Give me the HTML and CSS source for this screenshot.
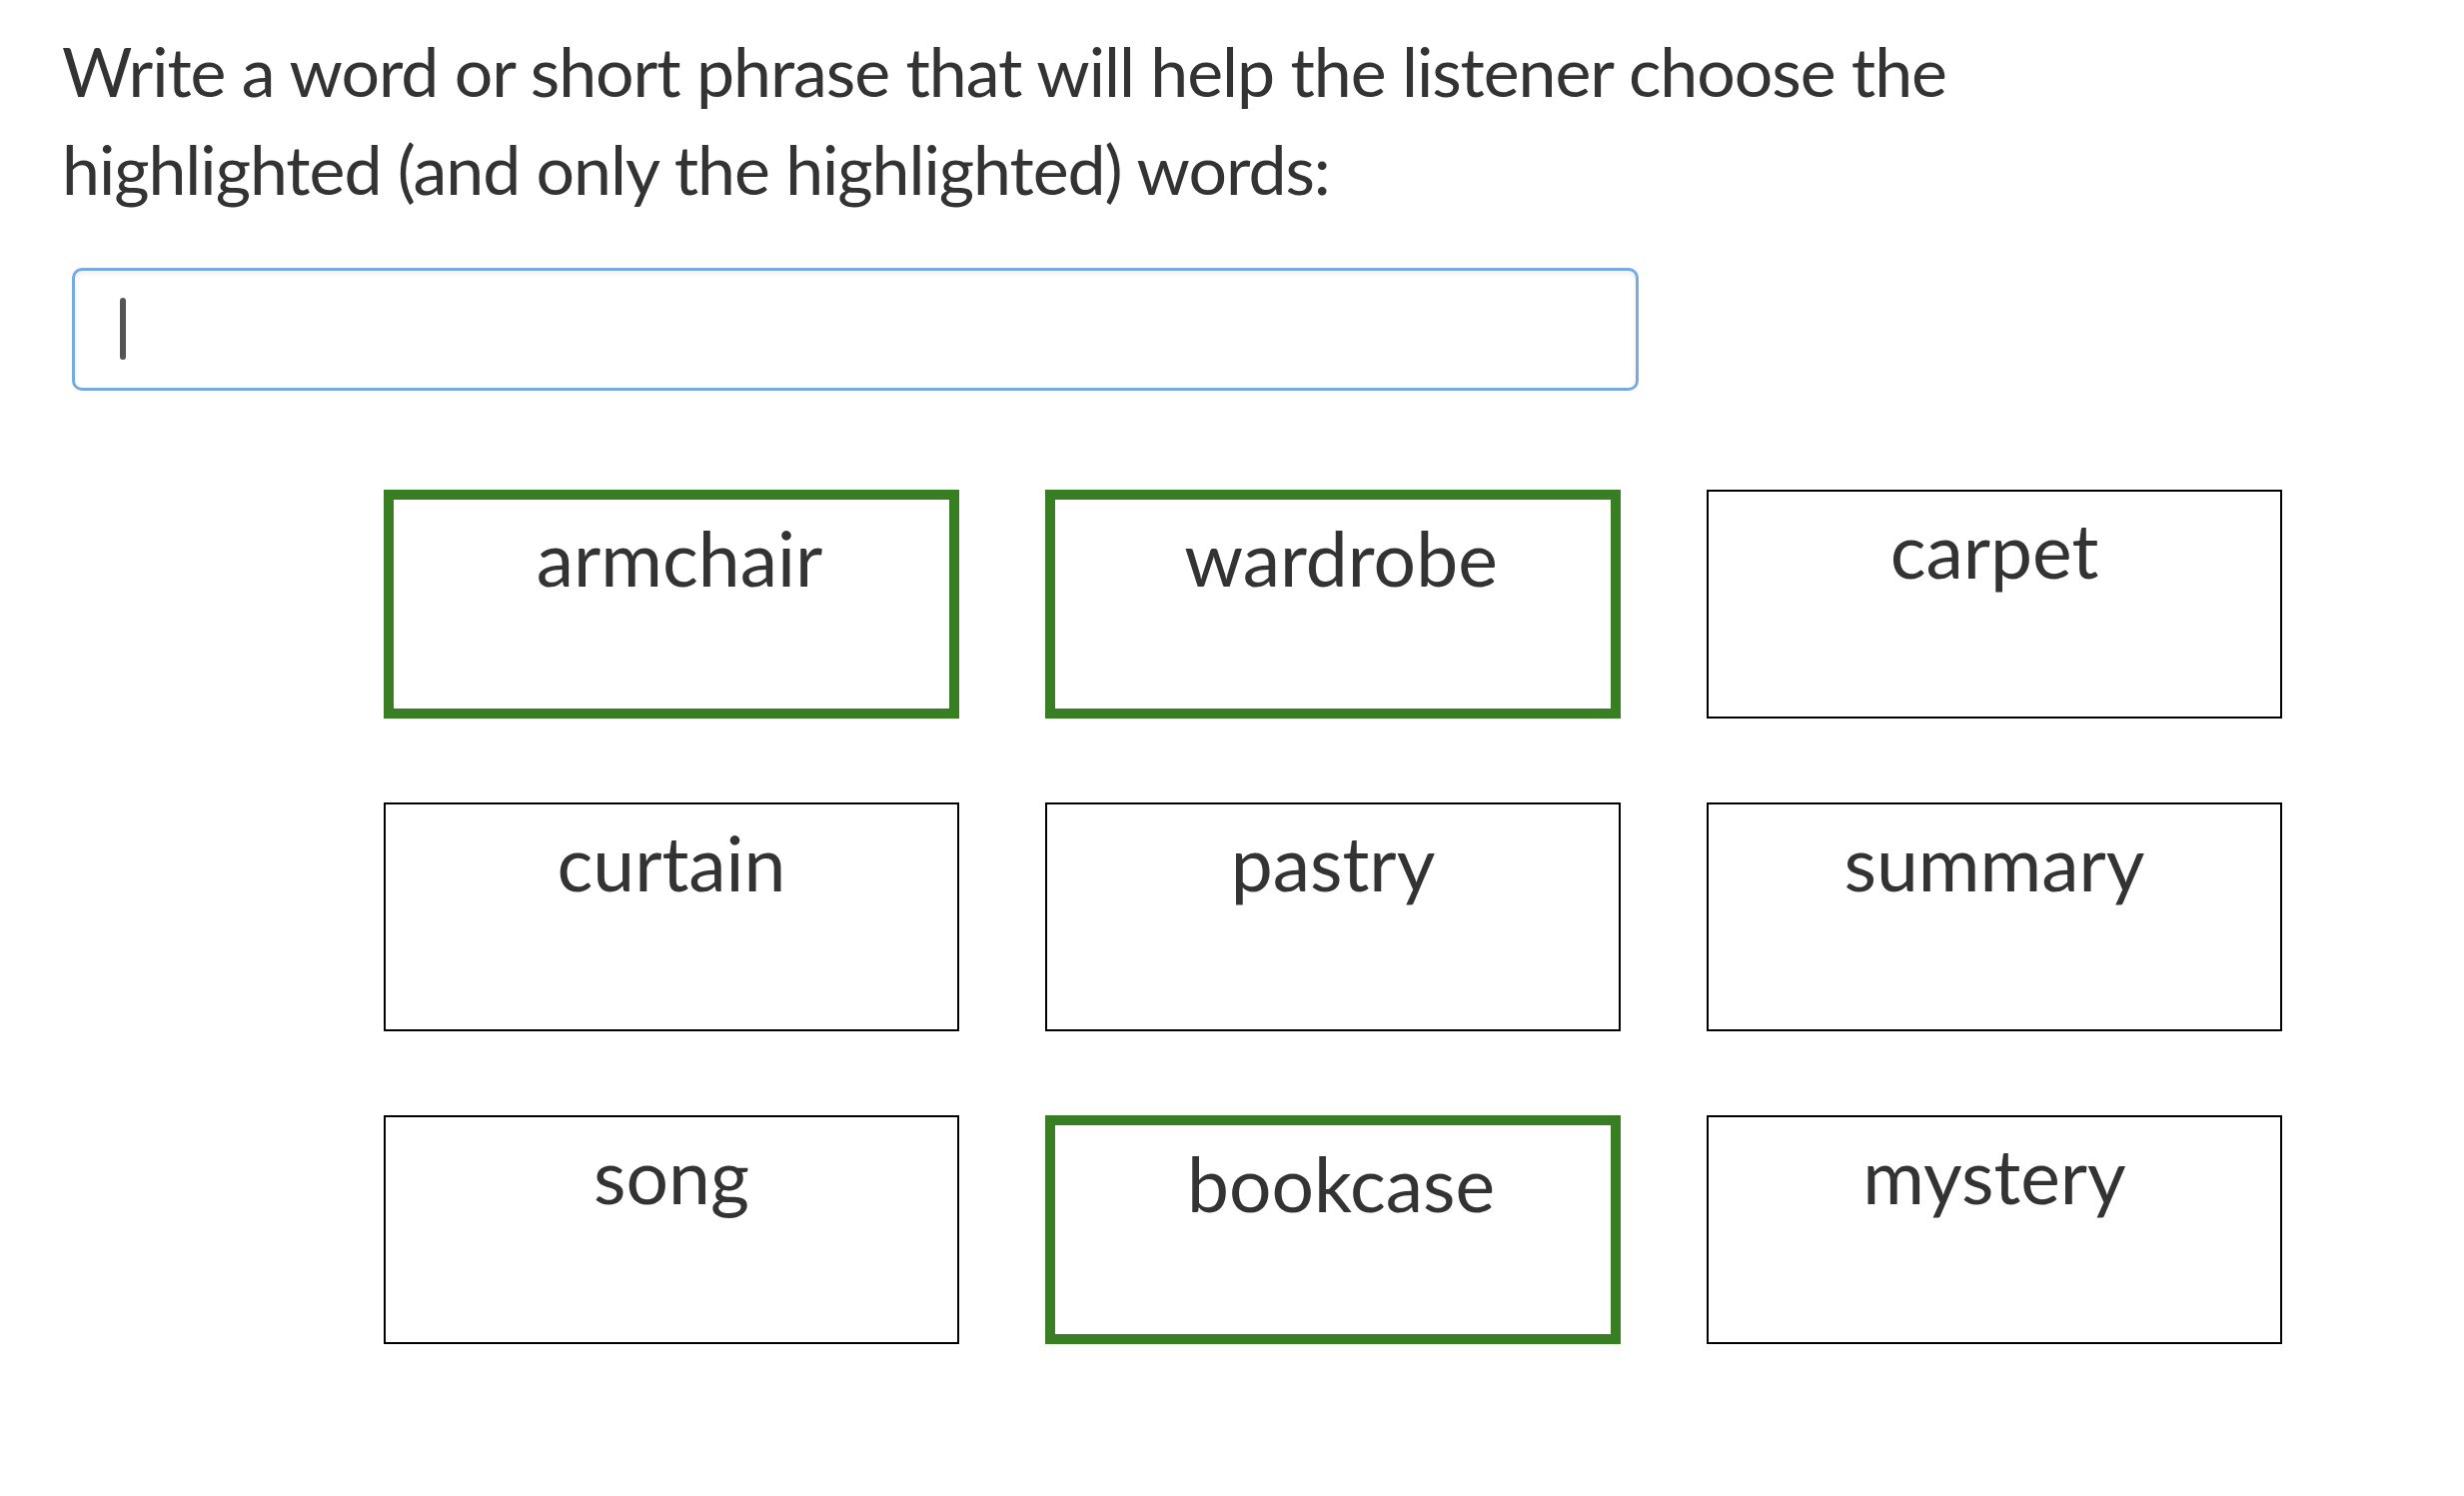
FILE: index.html
```html
<!DOCTYPE html>
<html lang="en">
<head>
<meta charset="utf-8">
<title>Describe the highlighted words</title>
<link rel="stylesheet" href="styles.css">
</head>
<body>
<main class="page">
  <p class="prompt">Write a word or short phrase that will help the listener choose the highlighted (and only the highlighted) words:</p>
  <div class="field" role="textbox" aria-label="Clue"><span class="caret"></span></div>
  <div class="grid">
    <div class="tile sel"><div class="label">armchair</div></div>
    <div class="tile sel"><div class="label">wardrobe</div></div>
    <div class="tile"><div class="label">carpet</div></div>
    <div class="tile"><div class="label">curtain</div></div>
    <div class="tile"><div class="label">pastry</div></div>
    <div class="tile"><div class="label">summary</div></div>
    <div class="tile"><div class="label">song</div></div>
    <div class="tile sel"><div class="label">bookcase</div></div>
    <div class="tile"><div class="label">mystery</div></div>
  </div>
</main>
</body>
</html>
```
FILE: styles.css
```css
html, body {
  margin: 0;
  padding: 0;
  background: #ffffff;
}
.page {
  font-family: Lato, "Open Sans", "Liberation Sans", sans-serif;
  color: #333333;
  padding: 22px 0 0 62px;
}
.prompt {
  margin: 0;
  font-size: 68px;
  line-height: 98px;
  letter-spacing: -1.05px;
  width: 1960px;
}
.field {
  box-sizing: border-box;
  margin: 50px 0 0 10px;
  width: 1568px;
  height: 123px;
  border: 3px solid #76abe2;
  border-radius: 10px;
  box-shadow: inset 0 3px 5px rgba(0, 0, 0, 0.06);
  padding: 27px 0 0 45px;
}
.caret {
  display: block;
  width: 6px;
  height: 62px;
  border-radius: 3px;
  background: #555555;
}
.grid {
  display: grid;
  grid-template-columns: repeat(3, 576px);
  grid-auto-rows: 229px;
  column-gap: 86px;
  row-gap: 84px;
  margin: 99px 0 0 322px;
}
.tile {
  box-sizing: border-box;
  border: 2px solid #000000;
  padding-top: 13px;
}
.tile.sel {
  border: 10px solid #387e22;
}
.label {
  width: 572px;
  text-align: center;
  font-size: 75px;
  line-height: 1.2;
  color: #333333;
}
```
